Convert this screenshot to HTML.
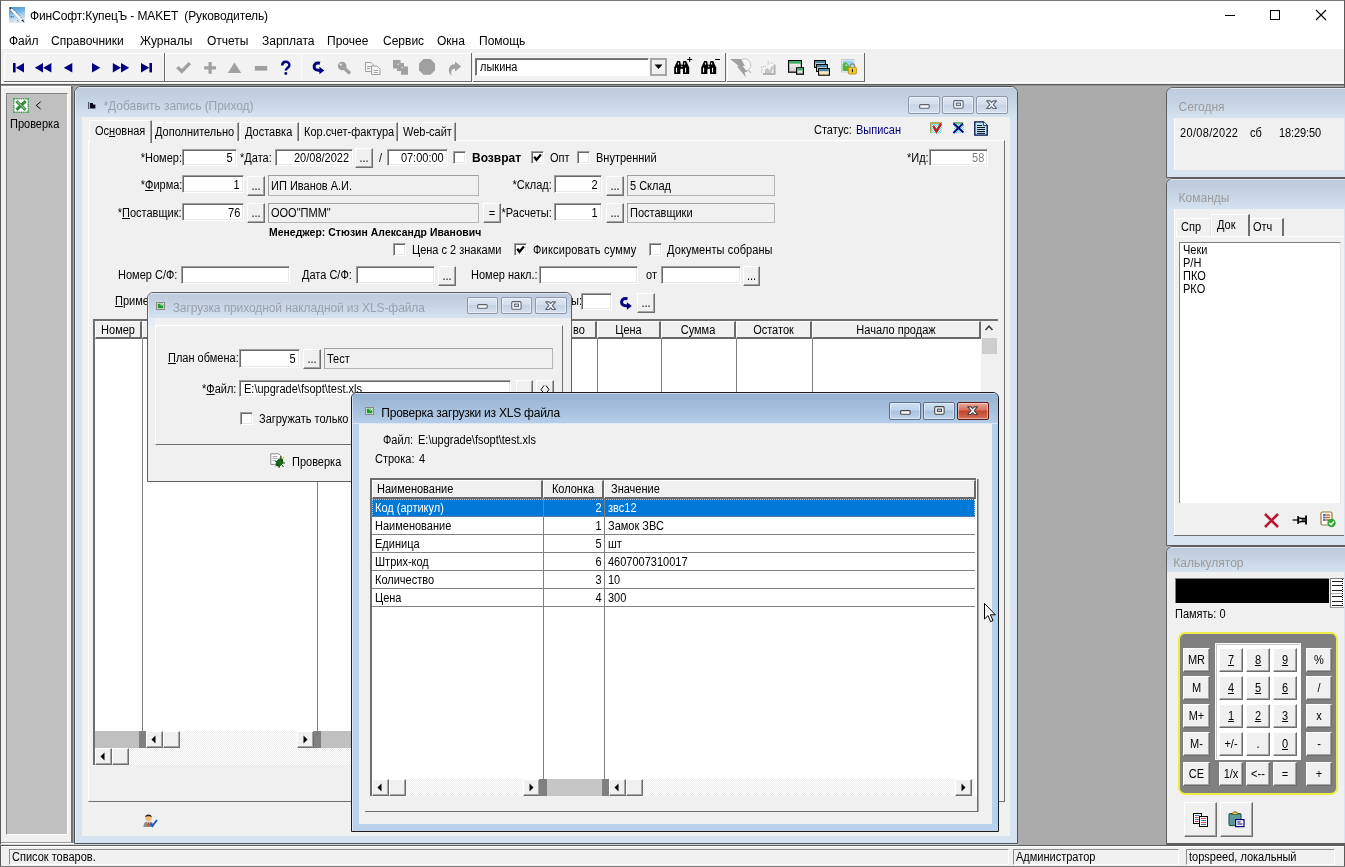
<!DOCTYPE html>
<html><head><meta charset="utf-8"><title>UI</title>
<style>
html,body{margin:0;padding:0;overflow:hidden;}
body{width:1345px;height:867px;overflow:hidden;position:relative;background:#ababab;font-family:"Liberation Sans",sans-serif;font-size:11px;}
.a{position:absolute;box-sizing:content-box;}
.t{font-family:"Liberation Sans",sans-serif;font-size:12px;line-height:13px;white-space:pre;color:#000;transform:scaleX(0.917);transform-origin:0 50%;}
.tr{transform-origin:100% 50%;}
.tc{transform-origin:50% 50%;}
.t12{font-family:"Liberation Sans",sans-serif;font-size:12px;line-height:14px;white-space:pre;color:#000;}
.sunk{border:1px solid;border-color:#a0a0a0 #fff #fff #a0a0a0;background:#fff;box-shadow:inset 1px 1px 0 #696969,inset -1px -1px 0 #e8e8e8;}
.gf{border:1px solid #a6a6a6;border-color:#a0a0a0 #b4b4b4 #b4b4b4 #a0a0a0;background:#f0f0f0;}
.btn{border:1px solid;border-color:#fff #6e6e6e #6e6e6e #fff;background:#f0f0f0;box-shadow:inset -1px -1px 0 #a5a5a5;}
.chk{border:1px solid;border-color:#a0a0a0 #fff #fff #a0a0a0;background:#fff;box-shadow:inset 1px 1px 0 #696969,inset -1px -1px 0 #e8e8e8;}
u{text-decoration:underline;text-underline-offset:1px;}
</style></head><body><div id="root" style="position:absolute;left:0;top:0;width:1345px;height:867px;overflow:hidden;will-change:transform;">
<div class="a " style="left:0px;top:0px;width:1345px;height:867px;background:#ababab;"></div>
<div class="a " style="left:0px;top:0px;width:1345px;height:49px;background:#fff;"></div>
<div class="a " style="left:0px;top:0px;width:1345px;height:1px;background:#7a7a7a;"></div>
<svg class="a" style="left:9px;top:7px" width="16" height="16" viewBox="0 0 16 16"><defs><linearGradient id="ti" x1="0" y1="0" x2="0.25" y2="1"><stop offset="0" stop-color="#4890cc"/><stop offset="0.35" stop-color="#6cb0e2"/><stop offset="0.7" stop-color="#b4d4ec"/><stop offset="1" stop-color="#dfecf6"/></linearGradient></defs><rect width="16" height="16" fill="url(#ti)"/><path d="M1.2 1.6 L3 1.4 L13.8 12.6 L15 15 L12.4 14 L1.6 3.6 Z" fill="#fff"/><path d="M3.4 1.6 L13.6 12" stroke="#0c2030" stroke-width="0.8" stroke-dasharray="0.9 1.5"/><path d="M1.6 4.2 L4 6.8" stroke="#0c2030" stroke-width="0.8" stroke-dasharray="0.9 1.2"/><path d="M0.6 0.6 L2.8 0.8 L1.2 2.6Z" fill="#0a1a26"/><path d="M12.2 13.2 L15.4 15.6 L14 12.4Z" fill="#05080c"/><path d="M1.6 9.8 h3.2" stroke="#1a3040" stroke-width="0.8" stroke-dasharray="1.4 0.6"/><path d="M8 13.4 l2 1.2" stroke="#1a3040" stroke-width="0.7" stroke-dasharray="0.8 0.8"/></svg>
<div class="a t12" style="left:30px;top:9.3px;letter-spacing:-0.12px;">ФинСофт:КупецЪ - MAKET  (Руководитель)</div>
<svg class="a" style="left:1215px;top:0" width="130" height="30" viewBox="0 0 130 30"><path d="M10 15.5 h10" stroke="#000" stroke-width="1"/><rect x="55.5" y="10.5" width="9" height="9" fill="none" stroke="#000" stroke-width="1"/><path d="M101 10 l10 10 M111 10 l-10 10" stroke="#000" stroke-width="1.1"/></svg>
<div class="a t12" style="left:9px;top:34.4px;">Файл</div>
<div class="a t12" style="left:51px;top:34.4px;">Справочники</div>
<div class="a t12" style="left:140px;top:34.4px;">Журналы</div>
<div class="a t12" style="left:207px;top:34.4px;">Отчеты</div>
<div class="a t12" style="left:262px;top:34.4px;">Зарплата</div>
<div class="a t12" style="left:327px;top:34.4px;">Прочее</div>
<div class="a t12" style="left:383px;top:34.4px;">Сервис</div>
<div class="a t12" style="left:437px;top:34.4px;">Окна</div>
<div class="a t12" style="left:479px;top:34.4px;">Помощь</div>
<div class="a " style="left:0px;top:49px;width:1345px;height:36px;background:#f0f0f0;"></div>
<div class="a " style="left:0px;top:82px;width:1345px;height:1px;background:#fff;"></div>
<div class="a " style="left:0px;top:83px;width:1345px;height:1px;background:#f0f0f0;"></div>
<div class="a " style="left:0px;top:84px;width:1345px;height:1px;background:#5c5c5c;"></div>
<div class="a " style="left:0px;top:85px;width:1345px;height:1px;background:#8e8e8e;"></div>
<div class="a " style="left:0px;top:0px;width:1px;height:867px;background:#5a5a5a;"></div>
<div class="a " style="left:1344px;top:0px;width:1px;height:867px;background:#5a5a5a;"></div>
<div class="a " style="left:4px;top:53px;width:160px;height:28px;background:#f2f2f2;"></div>
<div class="a " style="left:4px;top:53px;width:160px;height:1px;background:#fff;"></div>
<div class="a " style="left:4px;top:53px;width:1px;height:28px;background:#fff;"></div>
<div class="a " style="left:4px;top:81px;width:161px;height:1px;background:#6a6a6a;"></div>
<div class="a " style="left:164px;top:53px;width:1px;height:29px;background:#6a6a6a;"></div>
<div class="a " style="left:165px;top:53px;width:306px;height:28px;background:#f2f2f2;"></div>
<div class="a " style="left:165px;top:53px;width:306px;height:1px;background:#fff;"></div>
<div class="a " style="left:165px;top:53px;width:1px;height:28px;background:#fff;"></div>
<div class="a " style="left:165px;top:81px;width:307px;height:1px;background:#6a6a6a;"></div>
<div class="a " style="left:471px;top:53px;width:1px;height:29px;background:#6a6a6a;"></div>
<div class="a " style="left:473px;top:53px;width:252px;height:28px;background:#f2f2f2;"></div>
<div class="a " style="left:473px;top:53px;width:252px;height:1px;background:#fff;"></div>
<div class="a " style="left:473px;top:53px;width:1px;height:28px;background:#fff;"></div>
<div class="a " style="left:473px;top:81px;width:253px;height:1px;background:#6a6a6a;"></div>
<div class="a " style="left:725px;top:53px;width:1px;height:29px;background:#6a6a6a;"></div>
<div class="a " style="left:727px;top:53px;width:137px;height:28px;background:#f2f2f2;"></div>
<div class="a " style="left:727px;top:53px;width:137px;height:1px;background:#fff;"></div>
<div class="a " style="left:727px;top:53px;width:1px;height:28px;background:#fff;"></div>
<div class="a " style="left:727px;top:81px;width:138px;height:1px;background:#6a6a6a;"></div>
<div class="a " style="left:864px;top:53px;width:1px;height:29px;background:#6a6a6a;"></div>
<div class="a " style="left:301px;top:54px;width:1px;height:27px;background:#fafafa;"></div>
<svg class="a" style="left:0;top:49px" width="470" height="36" viewBox="0 49 470 36"><g fill="#000080"><rect x="13" y="63" width="2.6" height="9.4"/><path d="M24 63 L24 72.4 L15.8 67.7Z"/><path d="M43 63 L43 72.4 L34.8 67.7Z"/><path d="M51.4 63 L51.4 72.4 L43.2 67.7Z"/><path d="M72.3 63 L72.3 72.4 L63.8 67.7Z"/><path d="M92 63 L92 72.4 L100.3 67.7Z"/><path d="M112.8 63 L112.8 72.4 L121 67.7Z"/><path d="M121 63 L121 72.4 L129.2 67.7Z"/><path d="M141 63 L141 72.4 L149.3 67.7Z"/><rect x="149.4" y="63" width="2.6" height="9.4"/></g><g fill="#a0a0a0"><path d="M176.2 68.2 L178.6 66 L181.8 69 L188.6 62 L191 64.2 L181.8 73.8Z"/><path d="M208.5 62 h3.2 v4.3 h4.3 v3.2 h-4.3 v4.3 h-3.2 v-4.3 h-4.3 v-3.2 h4.3Z"/><path d="M234.5 62.6 L241.2 73 L227.8 73Z"/><rect x="254.8" y="66" width="12.4" height="4.6"/></g><path d="M282.2 65.6 C282.2 60.6 289.4 60.6 289.4 65.2 C289.4 67.6 285.8 67.8 285.8 70.6" stroke="#000080" stroke-width="2.5" fill="none"/><circle cx="285.8" cy="73.5" r="1.45" fill="#000080"/><path d="M320 63.3 C315.6 62.2 313.8 64.6 314.2 67.4 C314.6 70.2 317 70.4 320 70.4" stroke="#000080" stroke-width="3" fill="none"/><path d="M319.4 66.7 L324.3 70.4 L319.4 74.2Z" fill="#000080"/><circle cx="342.2" cy="66" r="4.3" fill="#a0a0a0"/><circle cx="340.8" cy="64.6" r="1.1" fill="#f2f2f2"/><path d="M344 68 L350 73.6" stroke="#a0a0a0" stroke-width="3.4"/><g fill="#f4f4f4" stroke="#a0a0a0" stroke-width="1"><path d="M365.5 62.5 h5.5 l2.5 2.5 v6.5 h-8Z"/><path d="M371.5 66 h5.5 l3 3 v5.5 h-8.5Z"/></g><path d="M367 66.5 h4 M367 68.5 h3 M373.5 70.5 h4.5 M373.5 72.5 h4.5" stroke="#a0a0a0" stroke-width="0.9"/><rect x="393" y="60" width="7.5" height="8.5" fill="#a0a0a0"/><rect x="397" y="63" width="7" height="8" fill="#a0a0a0"/><rect x="401" y="66.5" width="7" height="8.2" fill="#a0a0a0"/><rect x="397.6" y="63.6" width="1.3" height="1.3" fill="#eee"/><rect x="401.6" y="67" width="1.3" height="1.3" fill="#eee"/><path d="M423.5 59 h7 l4.5 4.5 v6.8 l-4.5 4.4 h-7 l-4.5 -4.4 v-6.8Z" fill="#a0a0a0"/><path d="M455 61.4 L461.2 66.4 L455 71.4 L455 68.6 C451.5 68.6 450.5 71.5 451.8 75.8 C447 72 448 64.2 455 64.2Z" fill="#a0a0a0"/></svg>
<div class="a " style="left:475px;top:58px;width:172px;height:16px;background:#fff;border:1px solid;border-color:#7f7f7f #fff #fff #7f7f7f;box-shadow:inset 1px 1px 0 #6a6a6a;"></div>
<div class="a t" style="left:480px;top:61.3px;">лыкина</div>
<div class="a " style="left:650px;top:58px;width:13px;height:14px;background:#f0f0f0;border:2px solid #a6a6a6;"></div>
<svg class="a" style="left:654px;top:64px" width="10" height="6" viewBox="0 0 10 6"><path d="M0.5 0.5 h8 l-4 4.5Z" fill="#000"/></svg>
<svg class="a" style="left:674px;top:56px" width="22" height="20" viewBox="0 0 22 20"><g fill="#000"><path d="M3.2 5 h2.8 l0.6 2 v11 h-6.4 v-6.5Z"/><path d="M9.4 5 h2.8 l3 6.5 v6.5 h-6.4 v-11Z"/><rect x="6" y="8.6" width="3.6" height="4.2"/></g><g fill="#fff"><rect x="2" y="11.8" width="1.1" height="4.6"/><rect x="11" y="11.8" width="1.1" height="4.6"/><rect x="3.9" y="6.6" width="1" height="2"/><rect x="10.2" y="6.6" width="1" height="2"/><rect x="7.3" y="9.6" width="1" height="1.6"/><rect x="6.6" y="13.4" width="2.2" height="5"/></g><path d="M13.2 3.5 h5 M15.7 1 v5" stroke="#000" stroke-width="1"/></svg>
<svg class="a" style="left:701px;top:56px" width="22" height="20" viewBox="0 0 22 20"><g fill="#000"><path d="M3.2 5 h2.8 l0.6 2 v11 h-6.4 v-6.5Z"/><path d="M9.4 5 h2.8 l3 6.5 v6.5 h-6.4 v-11Z"/><rect x="6" y="8.6" width="3.6" height="4.2"/></g><g fill="#fff"><rect x="2" y="11.8" width="1.1" height="4.6"/><rect x="11" y="11.8" width="1.1" height="4.6"/><rect x="3.9" y="6.6" width="1" height="2"/><rect x="10.2" y="6.6" width="1" height="2"/><rect x="7.3" y="9.6" width="1" height="1.6"/><rect x="6.6" y="13.4" width="2.2" height="5"/></g><path d="M14 3.5 h5" stroke="#000" stroke-width="1"/></svg>
<svg class="a" style="left:729px;top:57px" width="24" height="22" viewBox="0 0 24 22"><circle cx="15.5" cy="8" r="6.3" fill="#f6f6f6" stroke="#c4c4c4" stroke-width="1"/><path d="M19 13 l3 3" stroke="#c4c4c4" stroke-width="1.4"/><path d="M1 2 L12 2 L16 9 L13.5 9 L18.5 15 L15.5 15 L17 20.5 L8 9.5 L10.5 9.5Z" fill="#a0a0a0"/></svg>
<svg class="a" style="left:760px;top:60px" width="18" height="16" viewBox="0 0 18 16"><path d="M14.6 4.5 V14 H3" stroke="#b2b2b2" stroke-width="2" fill="none"/><path d="M1.6 7 V14 M3 6.5 H6" stroke="#b8b8b8" stroke-width="1.1" fill="none" stroke-dasharray="1.2 1.2"/><path d="M5 13 V9.5 L7.5 8 L9.5 10.5 L12 6 L13.5 7 L11.5 12 V13Z" fill="#c4c4c4"/><path d="M8.2 1 v4 M10.5 3 h3" stroke="#b4b4b4" stroke-width="1.1" stroke-dasharray="1.2 1"/></svg>
<svg class="a" style="left:788px;top:60px" width="17" height="15" viewBox="0 0 17 15"><defs><linearGradient id="wg" x1="0" y1="0" x2="0" y2="1"><stop offset="0" stop-color="#fff"/><stop offset="1" stop-color="#c9c9c9"/></linearGradient></defs><rect x="0.6" y="0.6" width="12.8" height="11.6" fill="url(#wg)" stroke="#000" stroke-width="1.2"/><rect x="1.2" y="1.2" width="11.6" height="2.4" fill="#2ea85a"/><rect x="8.6" y="7.8" width="6.8" height="6.4" fill="url(#wg)" stroke="#000" stroke-width="1.2"/><rect x="9.2" y="8.4" width="5.6" height="2" fill="#2ea85a"/></svg>
<svg class="a" style="left:814px;top:60px" width="17" height="16" viewBox="0 0 17 16"><defs><linearGradient id="cg" x1="0" y1="0" x2="0" y2="1"><stop offset="0" stop-color="#fff"/><stop offset="1" stop-color="#f6dc9c"/></linearGradient></defs><g stroke="#000" stroke-width="1.1"><rect x="0.6" y="0.6" width="10.8" height="6.8" fill="#dfe8ee"/><rect x="2.6" y="4.6" width="10.8" height="6.8" fill="#dfe8ee"/><rect x="4.6" y="8.6" width="10.8" height="6.6" fill="url(#cg)"/></g><rect x="1.2" y="1.2" width="9.6" height="2" fill="#3e7da0"/><rect x="3.2" y="5.2" width="9.6" height="2" fill="#3e7da0"/><rect x="5.2" y="9.2" width="9.6" height="2" fill="#3e7da0"/></svg>
<svg class="a" style="left:841px;top:59px" width="17" height="16" viewBox="0 0 17 16"><defs><linearGradient id="pg" x1="0" y1="0" x2="0" y2="1"><stop offset="0" stop-color="#8ecdf0"/><stop offset="1" stop-color="#d8eefa"/></linearGradient></defs><rect x="0.5" y="0.5" width="12.5" height="12.5" fill="#fff" stroke="#c8c8c8"/><rect x="1.6" y="1.6" width="10.4" height="10.4" fill="url(#pg)"/><path d="M1.6 12 V5 C4 2.5 7 3.5 8 7 L10 9 L12 12Z" fill="#56b43c"/><path d="M4 7 l1.5 -2 l1 2Z" fill="#cfeec0"/><path d="M9 8.5 v-1.4 c0 -3 4.6 -3 4.6 0 v1.4" stroke="#8a8a8a" stroke-width="1.4" fill="none"/><rect x="7.4" y="8.4" width="8" height="6.6" rx="0.8" fill="#f3c930" stroke="#b88b0e" stroke-width="0.8"/><rect x="10.9" y="10" width="1.1" height="3.2" fill="#222"/></svg>
<div class="a " style="left:1px;top:844px;width:1343px;height:23px;background:#f0f0f0;"></div>
<div class="a " style="left:0px;top:844px;width:1345px;height:1px;background:#ababab;"></div>
<div class="a " style="left:1px;top:844px;width:1017px;height:1px;background:#d2d5d9;"></div>
<div class="a " style="left:1166px;top:844px;width:178px;height:1px;background:#c4c8cc;"></div>
<div class="a " style="left:0px;top:845px;width:1345px;height:1px;background:#5c5c5c;"></div>
<div class="a " style="left:1px;top:846px;width:1343px;height:1px;background:#fff;"></div>
<div class="a " style="left:9px;top:849px;width:998px;height:14px;border:1px solid;border-color:#8c8c8c #fff #fff #8c8c8c;background:#f0f0f0;"><span class="t" style="position:absolute;left:1.5px;top:1.2px">Список товаров.</span></div>
<div class="a " style="left:1013px;top:849px;width:164px;height:14px;border:1px solid;border-color:#8c8c8c #fff #fff #8c8c8c;background:#f0f0f0;"><span class="t" style="position:absolute;left:1.5px;top:1.2px">Администратор</span></div>
<div class="a " style="left:1186px;top:849px;width:147px;height:14px;border:1px solid;border-color:#8c8c8c #fff #fff #8c8c8c;background:#f0f0f0;"><span class="t" style="position:absolute;left:1.5px;top:1.2px">topspeed, локальный</span></div>
<div class="a " style="left:0px;top:866px;width:1345px;height:1px;background:#7a7a7a;"></div>
<div class="a " style="left:1px;top:86px;width:70px;height:756px;background:#f0f0f0;"></div>
<div class="a " style="left:1px;top:86px;width:70px;height:2px;background:#fbfbfb;"></div>
<div class="a " style="left:71px;top:86px;width:1px;height:757px;background:#6e6e6e;"></div>
<div class="a " style="left:72px;top:86px;width:1px;height:757px;background:#787878;"></div>
<div class="a " style="left:73px;top:86px;width:1px;height:757px;background:#a6a6a6;"></div>
<div class="a " style="left:1px;top:842px;width:71px;height:1px;background:#9a9a9a;"></div>
<div class="a " style="left:1px;top:843px;width:73px;height:1px;background:#fff;"></div>
<div class="a " style="left:6px;top:93px;width:60px;height:740px;background:#c0c0c0;border:1px solid;border-color:#808080 #fff #fff #808080;"></div>
<svg class="a" style="left:13px;top:98px" width="16" height="15" viewBox="0 0 16 15"><rect x="0.75" y="0.75" width="14.5" height="13.5" fill="#fff" stroke="#3c9a4a" stroke-width="1.5" stroke-dasharray="1.2 0.6"/><path d="M3.4 3.2 L12.6 11.8 M12.6 3.2 L3.4 11.8" stroke="#2e8b3c" stroke-width="3"/><path d="M4 3.4 L12 11.4" stroke="#fff" stroke-width="0.7"/></svg>
<svg class="a" style="left:35px;top:101px" width="7" height="9" viewBox="0 0 7 9"><path d="M5.6 0.8 L1.2 4.4 L5.6 8" stroke="#000" stroke-width="1" fill="none"/></svg>
<div class="a t" style="left:9.5px;top:118.4px;">Проверка</div>
<div class="a " style="left:74px;top:86px;width:942px;height:756px;background:#d8e3f1;border:1px solid #50525a;border-radius:7px 7px 0 0;overflow:hidden;"><div style="position:absolute;left:0;top:0;right:0;height:30px;background:linear-gradient(#bccadb 0%,#c6d4e4 50%,#d5e2f0 100%);"></div><div style="position:absolute;left:0;top:0;right:0;height:1px;background:rgba(255,255,255,0.55)"></div><div style="position:absolute;left:0;top:0;bottom:0;width:1px;background:rgba(255,255,255,0.5)"></div></div>
<div class="a " style="left:82px;top:117px;width:928px;height:719px;background:#f0f0f0;"></div>
<svg class="a" style="left:88px;top:102px" width="8" height="7" viewBox="0 0 8 7"><rect x="0" y="0" width="8" height="7" fill="#bfe4f4" opacity="0.6"/><rect x="0.3" y="0" width="0.9" height="7" fill="#223"/><path d="M2 1 h3 v1.6 h2.4 v4 h-5.4Z" fill="#0a0a1e"/></svg>
<div class="a t12" style="left:103.5px;top:99.2px;color:#9aa1ac;letter-spacing:-0.05px;">*Добавить запись (Приход)</div>
<div class="a " style="left:908px;top:96px;width:30px;height:16px;background:linear-gradient(#dfe8f3 0%,#d3deec 45%,#c6d3e4 50%,#d6e0ee 100%);border:1px solid #8d99aa;border-radius:2px;box-shadow:inset 0 0 0 1px rgba(255,255,255,0.45);"></div>
<svg class="a" style="left:918.5px;top:103.8px" width="11" height="5.5" viewBox="0 0 12 6"><rect x="0.7" y="0.7" width="10.4" height="4" rx="1" fill="#f7f9fb" stroke="#5c6470" stroke-width="1.2"/></svg>
<div class="a " style="left:942px;top:96px;width:30px;height:16px;background:linear-gradient(#dfe8f3 0%,#d3deec 45%,#c6d3e4 50%,#d6e0ee 100%);border:1px solid #8d99aa;border-radius:2px;box-shadow:inset 0 0 0 1px rgba(255,255,255,0.45);"></div>
<svg class="a" style="left:952.5px;top:100.0px" width="11" height="9" viewBox="0 0 12 10"><rect x="0.7" y="0.7" width="10.4" height="8.4" rx="1.2" fill="#f7f9fb" stroke="#5c6470" stroke-width="1.2"/><rect x="3.6" y="3.4" width="4.6" height="2.8" fill="#d5deea" stroke="#5c6470" stroke-width="1.1"/></svg>
<div class="a " style="left:976px;top:96px;width:30px;height:16px;background:linear-gradient(#dfe8f3 0%,#d3deec 45%,#c6d3e4 50%,#d6e0ee 100%);border:1px solid #8d99aa;border-radius:2px;box-shadow:inset 0 0 0 1px rgba(255,255,255,0.45);"></div>
<svg class="a" style="left:986.4px;top:100.0px" width="11.2" height="9.5" viewBox="0 0 13 11"><path d="M0.8 1 h3.9 l1.8 2 l1.8 -2 h3.9 l-3.8 4.4 l3.8 4.4 h-3.9 l-1.8 -2 l-1.8 2 h-3.9 l3.8 -4.4Z" fill="#f7f9fb" stroke="#5c6470" stroke-width="1.25" stroke-linejoin="round"/></svg>
<div class="a " style="left:88px;top:140px;width:915px;height:660px;border:1px solid;border-color:#fff #6e6e6e #6e6e6e #fff;background:#f0f0f0;"></div>
<div class="a " style="left:153px;top:122px;width:84px;height:18px;background:#f0f0f0;border-top:1px solid #fff;border-left:1px solid #fff;border-right:1px solid #696969;box-shadow:inset -1px 0 0 #a0a0a0;"></div>
<div class="a t" style="left:155px;top:126.1px;"><u>Д</u>ополнительно</div>
<div class="a " style="left:240px;top:122px;width:57px;height:18px;background:#f0f0f0;border-top:1px solid #fff;border-left:1px solid #fff;border-right:1px solid #696969;box-shadow:inset -1px 0 0 #a0a0a0;"></div>
<div class="a t" style="left:245px;top:126.1px;">Доставка</div>
<div class="a " style="left:300px;top:122px;width:96px;height:18px;background:#f0f0f0;border-top:1px solid #fff;border-left:1px solid #fff;border-right:1px solid #696969;box-shadow:inset -1px 0 0 #a0a0a0;"></div>
<div class="a t" style="left:304px;top:126.1px;">Кор.счет-фактура</div>
<div class="a " style="left:399px;top:122px;width:55px;height:18px;background:#f0f0f0;border-top:1px solid #fff;border-left:1px solid #fff;border-right:1px solid #696969;box-shadow:inset -1px 0 0 #a0a0a0;"></div>
<div class="a t" style="left:403px;top:126.1px;">Web-сайт</div>
<div class="a " style="left:89px;top:120px;width:61px;height:22px;background:#f0f0f0;border-top:1px solid #fff;border-left:1px solid #fff;border-right:1px solid #696969;box-shadow:inset -1px 0 0 #a0a0a0;"></div>
<div class="a t" style="left:94.5px;top:124.9px;">Ос<u>н</u>овная</div>
<div class="a t" style="left:814px;top:123.6px;">Статус:</div>
<div class="a t" style="left:856px;top:123.6px;color:#000080;">Выписан</div>
<div class="a " style="left:932px;top:124px;width:10px;height:9px;background-image:repeating-conic-gradient(#fff 0% 25%,#5fe0e8 0% 50%);background-size:2px 2px;"></div>
<svg class="a" style="left:930px;top:122px" width="13" height="12" viewBox="0 0 13 12"><path d="M0.8 11 V1 H12" stroke="#a09838" stroke-width="1.4" fill="none"/><path d="M3.4 4 L6.4 9.6 L11 1.6" stroke="#c81820" stroke-width="2.4" fill="none"/></svg>
<div class="a " style="left:954px;top:124px;width:10px;height:9px;background-image:repeating-conic-gradient(#fff 0% 25%,#5fe0e8 0% 50%);background-size:2px 2px;"></div>
<svg class="a" style="left:952px;top:122px" width="13" height="12" viewBox="0 0 13 12"><path d="M1 1 H11" stroke="#40a040" stroke-width="1.4"/><path d="M1.6 1.6 L11.4 10.6 M11 1.6 L1.4 11" stroke="#000080" stroke-width="2"/></svg>
<svg class="a" style="left:974px;top:121px" width="15" height="15" viewBox="0 0 15 15"><path d="M0.8 0.8 h8.6 l3.8 3.8 v9.6 h-12.4Z" fill="#bfe2f8" stroke="#00104a" stroke-width="1.3"/><path d="M9.4 0.8 v3.8 h3.8" fill="#e8f6ff" stroke="#00104a" stroke-width="0.8"/><path d="M3 4.5 h5 M3 6.5 h8 M3 8.5 h8 M3 10.5 h8 M3 12.4 h8" stroke="#000" stroke-width="0.9"/></svg>
<div class="a t tr" style="right:1163px;top:151.6px;">*Номер:</div>
<div class="a sunk" style="left:182px;top:149px;width:53px;height:15px;background:#fff;"><span class="t tr" style="position:absolute;right:3px;top:2.4px;color:#000">5</span></div>
<div class="a t" style="left:240px;top:151.6px;">*<u>Д</u>ата:</div>
<div class="a sunk" style="left:275px;top:149px;width:76px;height:15px;background:#fff;"><span class="t tr" style="position:absolute;right:3px;top:2.4px;color:#000">20/08/2022</span></div>
<div class="a btn" style="left:355px;top:148px;width:16px;height:18px;"><span class="t tc" style="position:absolute;left:0;right:0;text-align:center;top:3.0px;">...</span></div>
<div class="a t" style="left:379px;top:151.6px;">/</div>
<div class="a sunk" style="left:387px;top:149px;width:59px;height:15px;background:#fff;"><span class="t tr" style="position:absolute;right:3px;top:2.4px;color:#000">07:00:00</span></div>
<div class="a chk" style="left:453px;top:151px;width:11px;height:11px;"></div>
<div class="a t" style="left:472px;top:151.6px;font-weight:bold;transform:none;">Возврат</div>
<div class="a chk" style="left:531px;top:151px;width:11px;height:11px;"><svg width="11" height="11" viewBox="0 0 11 11" style="position:absolute;left:0;top:0"><path d="M2.2 4.8 L4.5 7.8 L8.9 2.6" stroke="#000" stroke-width="2.3" fill="none"/></svg></div>
<div class="a t" style="left:550px;top:151.6px;">Опт</div>
<div class="a chk" style="left:577px;top:151px;width:11px;height:11px;"></div>
<div class="a t" style="left:596px;top:151.6px;">Внутренний</div>
<div class="a t tr" style="right:416.5px;top:151.6px;">*Ид:</div>
<div class="a sunk" style="left:929px;top:149px;width:57px;height:15px;background:#fff;"><span class="t tr" style="position:absolute;right:3px;top:2.4px;color:#808080">58</span></div>
<div class="a t tr" style="right:1163px;top:179.1px;">*<u>Ф</u>ирма:</div>
<div class="a sunk" style="left:182px;top:175px;width:60px;height:16px;background:#fff;"><span class="t tr" style="position:absolute;right:3px;top:2.9px;color:#000">1</span></div>
<div class="a btn" style="left:247px;top:176px;width:16px;height:18px;"><span class="t tc" style="position:absolute;left:0;right:0;text-align:center;top:3.0px;">...</span></div>
<div class="a gf" style="left:268px;top:175px;width:209px;height:19px;"><span class="t" style="position:absolute;left:2px;top:3.6px;">ИП Иванов А.И.</span></div>
<div class="a t tr" style="right:793px;top:179.1px;">*Склад:</div>
<div class="a sunk" style="left:554px;top:175px;width:46px;height:16px;background:#fff;"><span class="t tr" style="position:absolute;right:3px;top:2.9px;color:#000">2</span></div>
<div class="a btn" style="left:606px;top:176px;width:16px;height:18px;"><span class="t tc" style="position:absolute;left:0;right:0;text-align:center;top:3.0px;">...</span></div>
<div class="a gf" style="left:627px;top:175px;width:146px;height:19px;"><span class="t" style="position:absolute;left:2px;top:3.6px;">5 Склад</span></div>
<div class="a t tr" style="right:1163px;top:206.6px;">*<u>П</u>оставщик:</div>
<div class="a sunk" style="left:182px;top:203px;width:60px;height:16px;background:#fff;"><span class="t tr" style="position:absolute;right:3px;top:2.9px;color:#000">76</span></div>
<div class="a btn" style="left:247px;top:203px;width:16px;height:18px;"><span class="t tc" style="position:absolute;left:0;right:0;text-align:center;top:3.0px;">...</span></div>
<div class="a gf" style="left:268px;top:203px;width:209px;height:18px;"><span class="t" style="position:absolute;left:2px;top:3.1px;">ООО"ПММ"</span></div>
<div class="a btn" style="left:483px;top:203px;width:16px;height:18px;"><span class="t tc" style="position:absolute;left:0;right:0;text-align:center;top:3.0px;">=</span></div>
<div class="a t tr" style="right:793px;top:206.6px;">*Расчеты:</div>
<div class="a sunk" style="left:554px;top:203px;width:46px;height:16px;background:#fff;"><span class="t tr" style="position:absolute;right:3px;top:2.9px;color:#000">1</span></div>
<div class="a btn" style="left:606px;top:203px;width:16px;height:18px;"><span class="t tc" style="position:absolute;left:0;right:0;text-align:center;top:3.0px;">...</span></div>
<div class="a gf" style="left:627px;top:203px;width:146px;height:18px;"><span class="t" style="position:absolute;left:2px;top:3.1px;">Поставщики</span></div>
<div class="a t" style="left:269px;top:225.8px;font-weight:bold;font-size:10.4px;letter-spacing:0.05px;transform:none;">Менеджер: Стюзин Александр Иванович</div>
<div class="a chk" style="left:393px;top:243px;width:11px;height:11px;"></div>
<div class="a t" style="left:411.5px;top:244.1px;">Цена с 2 знаками</div>
<div class="a chk" style="left:514px;top:243px;width:11px;height:11px;"><svg width="11" height="11" viewBox="0 0 11 11" style="position:absolute;left:0;top:0"><path d="M2.2 4.8 L4.5 7.8 L8.9 2.6" stroke="#000" stroke-width="2.3" fill="none"/></svg></div>
<div class="a t" style="left:533px;top:244.1px;letter-spacing:0.2px;">Фиксировать сумму</div>
<div class="a chk" style="left:649px;top:243px;width:11px;height:11px;"></div>
<div class="a t" style="left:667px;top:244.1px;letter-spacing:0.1px;">Документы собраны</div>
<div class="a t" style="left:117.5px;top:269.1px;">Номер С/Ф:</div>
<div class="a sunk" style="left:181px;top:266px;width:107px;height:16px;background:#fff;"></div>
<div class="a t" style="left:302px;top:269.1px;">Дата С/Ф:</div>
<div class="a sunk" style="left:356px;top:266px;width:77px;height:16px;background:#fff;"></div>
<div class="a btn" style="left:438px;top:266px;width:16px;height:18px;"><span class="t tc" style="position:absolute;left:0;right:0;text-align:center;top:3.0px;">...</span></div>
<div class="a t" style="left:470.5px;top:269.1px;">Номер накл.:</div>
<div class="a sunk" style="left:539px;top:266px;width:97px;height:16px;background:#fff;"></div>
<div class="a t" style="left:645.5px;top:269.1px;">от</div>
<div class="a sunk" style="left:661px;top:266px;width:78px;height:16px;background:#fff;"></div>
<div class="a btn" style="left:743px;top:266px;width:15px;height:18px;"><span class="t tc" style="position:absolute;left:0;right:0;text-align:center;top:3.0px;">...</span></div>
<div class="a t" style="left:115px;top:295.1px;"><u>П</u>риме</div>
<div class="a t" style="left:571px;top:295.1px;">ы:</div>
<div class="a sunk" style="left:581px;top:293px;width:29px;height:15px;background:#fff;"></div>
<svg class="a" style="left:619px;top:297px" width="13" height="13" viewBox="311.5 61.5 13 13"><path d="M320 63.3 C315.6 62.2 313.8 64.6 314.2 67.4 C314.6 70.2 317 70.4 320 70.4" stroke="#000080" stroke-width="3" fill="none"/><path d="M319.4 66.7 L324.3 70.4 L319.4 74.2Z" fill="#000080"/></svg>
<div class="a btn" style="left:637px;top:293px;width:16px;height:18px;"><span class="t tc" style="position:absolute;left:0;right:0;text-align:center;top:3.0px;">...</span></div>
<div class="a " style="left:93px;top:319px;width:905px;height:446px;background:#fff;"></div>
<div class="a " style="left:93px;top:319px;width:905px;height:2px;background:#6e6e6e;"></div>
<div class="a " style="left:93px;top:319px;width:2px;height:446px;background:#6e6e6e;"></div>
<div class="a " style="left:95px;top:321px;width:44px;height:15px;background:#f0f0f0;border-left:1px solid #fff;border-top:1px solid #fff;border-right:2px solid #6a6a6a;border-bottom:2px solid #6a6a6a;"></div>
<div class="a t tc" style="left:95px;width:46px;text-align:center;top:323.9px;">Номер</div>
<div class="a " style="left:142px;top:321px;width:452px;height:15px;background:#f0f0f0;border-left:1px solid #fff;border-top:1px solid #fff;border-right:2px solid #6a6a6a;border-bottom:2px solid #6a6a6a;"></div>
<div class="a " style="left:597px;top:321px;width:61px;height:15px;background:#f0f0f0;border-left:1px solid #fff;border-top:1px solid #fff;border-right:2px solid #6a6a6a;border-bottom:2px solid #6a6a6a;"></div>
<div class="a t tc" style="left:597px;width:63px;text-align:center;top:323.9px;">Цена</div>
<div class="a " style="left:661px;top:321px;width:72px;height:15px;background:#f0f0f0;border-left:1px solid #fff;border-top:1px solid #fff;border-right:2px solid #6a6a6a;border-bottom:2px solid #6a6a6a;"></div>
<div class="a t tc" style="left:661px;width:74px;text-align:center;top:323.9px;">Сумма</div>
<div class="a " style="left:736px;top:321px;width:73px;height:15px;background:#f0f0f0;border-left:1px solid #fff;border-top:1px solid #fff;border-right:2px solid #6a6a6a;border-bottom:2px solid #6a6a6a;"></div>
<div class="a t tc" style="left:736px;width:75px;text-align:center;top:323.9px;">Остаток</div>
<div class="a " style="left:812px;top:321px;width:166px;height:15px;background:#f0f0f0;border-left:1px solid #fff;border-top:1px solid #fff;border-right:2px solid #6a6a6a;border-bottom:2px solid #6a6a6a;"></div>
<div class="a t tc" style="left:812px;width:168px;text-align:center;top:323.9px;">Начало продаж</div>
<div class="a t" style="left:572.6px;top:323.9px;">во</div>
<div class="a " style="left:142px;top:339px;width:1px;height:392px;background:#808080;"></div>
<div class="a " style="left:317px;top:339px;width:1px;height:392px;background:#808080;"></div>
<div class="a " style="left:597px;top:339px;width:1px;height:392px;background:#808080;"></div>
<div class="a " style="left:661px;top:339px;width:1px;height:392px;background:#808080;"></div>
<div class="a " style="left:736px;top:339px;width:1px;height:392px;background:#808080;"></div>
<div class="a " style="left:812px;top:339px;width:1px;height:392px;background:#808080;"></div>
<div class="a " style="left:981px;top:321px;width:17px;height:410px;background:#f0f0f0;"></div>
<svg class="a" style="left:984px;top:324px" width="10" height="8" viewBox="0 0 10 8"><path d="M1.5 6 L5 2.2 L8.5 6" stroke="#404040" stroke-width="1.6" fill="none"/></svg>
<div class="a " style="left:982px;top:338px;width:15px;height:16px;background:#cdcdcd;"></div>
<div class="a " style="left:95px;top:731px;width:903px;height:17px;background-image:repeating-conic-gradient(#fff 0% 25%,#ececec 0% 50%);background-size:2px 2px;"></div>
<div class="a " style="left:95px;top:748px;width:903px;height:17px;background-image:repeating-conic-gradient(#fff 0% 25%,#ececec 0% 50%);background-size:2px 2px;"></div>
<div class="a " style="left:95px;top:731px;width:44px;height:17px;background:#c0c0c0;"></div>
<div class="a " style="left:139px;top:731px;width:7px;height:17px;background:#808080;"></div>
<div class="a btn" style="left:146px;top:731px;width:15px;height:15px;"></div>
<svg class="a" style="left:151px;top:735px" width="5" height="9" viewBox="0 0 5 9"><path d="M4.5 0.5 V8.5 L0.5 4.5Z" fill="#000"/></svg>
<div class="a btn" style="left:163px;top:731px;width:15px;height:15px;"></div>
<div class="a btn" style="left:297px;top:731px;width:15px;height:15px;"></div>
<svg class="a" style="left:303px;top:735px" width="5" height="9" viewBox="0 0 5 9"><path d="M0.5 0.5 V8.5 L4.5 4.5Z" fill="#000"/></svg>
<div class="a " style="left:314px;top:731px;width:7px;height:17px;background:#808080;"></div>
<div class="a " style="left:321px;top:731px;width:40px;height:17px;background:#c0c0c0;"></div>
<div class="a btn" style="left:95px;top:748px;width:15px;height:15px;"></div>
<svg class="a" style="left:100px;top:752px" width="5" height="9" viewBox="0 0 5 9"><path d="M4.5 0.5 V8.5 L0.5 4.5Z" fill="#000"/></svg>
<div class="a btn" style="left:112px;top:748px;width:15px;height:15px;"></div>
<svg class="a" style="left:142px;top:812px" width="16" height="16" viewBox="0 0 16 16"><path d="M1.5 15 C1.5 10.5 3.5 9.5 6.5 9.5 C9.5 9.5 11.5 10.5 11.5 15Z" fill="#8c8c8c"/><path d="M5 9.6 L6.5 13.5 L8 9.6Z" fill="#fff"/><path d="M6 10.2 h1 l0.4 3 l-0.9 1 l-0.9 -1Z" fill="#d04010"/><circle cx="6.5" cy="6" r="3.1" fill="#f4b878"/><path d="M3.2 5.4 C3 1.6 10 1.6 9.8 5.4 C8.5 4 4.5 4 3.2 5.4Z" fill="#2a1a10"/><path d="M8.2 11.4 L10.4 14 L15 8" stroke="#1c5ed0" stroke-width="2" fill="none"/></svg>
<div class="a " style="left:147px;top:292px;width:423px;height:188px;background:#eef1f6;border:1px solid #5e5e5e;border-radius:6px 6px 0 0;overflow:hidden;"><div style="position:absolute;left:0;top:0;right:0;height:25px;background:linear-gradient(#bccadb 0%,#c6d4e4 50%,#d5e2f0 100%);"></div><div style="position:absolute;left:0;top:0;right:0;height:1px;background:rgba(255,255,255,0.55)"></div><div style="position:absolute;left:0;top:0;bottom:0;width:1px;background:rgba(255,255,255,0.5)"></div></div>
<div class="a " style="left:155px;top:318px;width:408px;height:127px;background:#f0f0f0;"></div>
<div class="a " style="left:148px;top:318px;width:423px;height:163px;background:#f0f0f0;"></div>
<div class="a " style="left:148px;top:318px;width:7px;height:8px;background:#e6ecf5;"></div>
<svg class="a" style="left:156px;top:302px" width="9" height="8" viewBox="0 0 9 8"><rect x="0.5" y="0.5" width="8" height="7" fill="#fff" stroke="#8a8a8a" stroke-width="1"/><rect x="1.6" y="1.6" width="5.8" height="4.8" fill="#1f9a2e"/><path d="M4.4 2 l1.2 1.4 l1.4 -1.2" stroke="#fff" stroke-width="0.9" fill="none"/></svg>
<div class="a t12" style="left:172.7px;top:300.6px;color:#9aa2ae;letter-spacing:-0.1px;">Загрузка приходной накладной из XLS-файла</div>
<div class="a " style="left:467px;top:297px;width:29px;height:15px;background:linear-gradient(#dfe8f3 0%,#d3deec 45%,#c6d3e4 50%,#d6e0ee 100%);border:1px solid #8d99aa;border-radius:2px;box-shadow:inset 0 0 0 1px rgba(255,255,255,0.45);"></div>
<svg class="a" style="left:477.0px;top:304.3px" width="11" height="5.5" viewBox="0 0 12 6"><rect x="0.7" y="0.7" width="10.4" height="4" rx="1" fill="#f7f9fb" stroke="#5c6470" stroke-width="1.2"/></svg>
<div class="a " style="left:501px;top:297px;width:29px;height:15px;background:linear-gradient(#dfe8f3 0%,#d3deec 45%,#c6d3e4 50%,#d6e0ee 100%);border:1px solid #8d99aa;border-radius:2px;box-shadow:inset 0 0 0 1px rgba(255,255,255,0.45);"></div>
<svg class="a" style="left:511.0px;top:300.5px" width="11" height="9" viewBox="0 0 12 10"><rect x="0.7" y="0.7" width="10.4" height="8.4" rx="1.2" fill="#f7f9fb" stroke="#5c6470" stroke-width="1.2"/><rect x="3.6" y="3.4" width="4.6" height="2.8" fill="#d5deea" stroke="#5c6470" stroke-width="1.1"/></svg>
<div class="a " style="left:535px;top:297px;width:30px;height:15px;background:linear-gradient(#dfe8f3 0%,#d3deec 45%,#c6d3e4 50%,#d6e0ee 100%);border:1px solid #8d99aa;border-radius:2px;box-shadow:inset 0 0 0 1px rgba(255,255,255,0.45);"></div>
<svg class="a" style="left:545.4px;top:300.5px" width="11.2" height="9.5" viewBox="0 0 13 11"><path d="M0.8 1 h3.9 l1.8 2 l1.8 -2 h3.9 l-3.8 4.4 l3.8 4.4 h-3.9 l-1.8 -2 l-1.8 2 h-3.9 l3.8 -4.4Z" fill="#f7f9fb" stroke="#5c6470" stroke-width="1.25" stroke-linejoin="round"/></svg>
<div class="a " style="left:155px;top:325px;width:406px;height:118px;border:1px solid;border-color:#fff #6e6e6e #6e6e6e #fff;background:#f0f0f0;"></div>
<div class="a t" style="left:168px;top:352.1px;"><u>П</u>лан обмена:</div>
<div class="a sunk" style="left:239px;top:349px;width:59px;height:17px;background:#fff;"><span class="t tr" style="position:absolute;right:3px;top:3.4px;color:#000">5</span></div>
<div class="a btn" style="left:303px;top:349px;width:16px;height:18px;"><span class="t tc" style="position:absolute;left:0;right:0;text-align:center;top:3.0px;">...</span></div>
<div class="a gf" style="left:324px;top:348px;width:227px;height:19px;"><span class="t" style="position:absolute;left:2px;top:3.6px;">Тест</span></div>
<div class="a t" style="left:202px;top:382.6px;">*<u>Ф</u>айл:</div>
<div class="a sunk" style="left:239px;top:380px;width:270px;height:15px;background:#fff;"><span class="t " style="position:absolute;left:4px;top:2.4px;color:#000">E:\upgrade\fsopt\test.xls</span></div>
<div class="a btn" style="left:516px;top:380px;width:15px;height:18px;"></div>
<div class="a btn" style="left:536px;top:380px;width:16px;height:18px;"></div>
<svg class="a" style="left:540px;top:384px" width="10" height="11" viewBox="0 0 10 11"><path d="M4 1.5 L1 5.5 L4 9.5 M6 1.5 L9 5.5 L6 9.5" stroke="#000" stroke-width="1" fill="none"/></svg>
<div class="a chk" style="left:240px;top:412px;width:11px;height:11px;"></div>
<div class="a t" style="left:259px;top:412.9px;">Загружать только</div>
<svg class="a" style="left:270px;top:453px" width="17" height="16" viewBox="0 0 17 16"><path d="M0.8 0.8 h8 l1.6 1.6 v9 h-9.6Z" fill="#fff" stroke="#8a8a8a" stroke-width="1"/><path d="M2.5 3.5 h5 M2.5 5.5 h5 M2.5 7.5 h3" stroke="#9a9a9a" stroke-width="0.8"/><ellipse cx="9.5" cy="9.5" rx="3.2" ry="4.4" transform="rotate(35 9.5 9.5)" fill="#1e6a1e"/><path d="M5 8 l3 1 M5.5 13 l3 -2 M9 15 l0.5 -3 M13 6 l-2 2 M15 10 l-3 0 M13.5 14 l-2 -2.5 M11 3 l0 3" stroke="#103c10" stroke-width="1"/><path d="M12.5 5.5 l1.5 -1.5" stroke="#e0d020" stroke-width="1.4"/></svg>
<div class="a t" style="left:292.4px;top:455.6px;">Проверка</div>
<div class="a " style="left:351px;top:392px;width:646px;height:438px;background:#b9d1ea;border:1px solid #1c1c1c;border-radius:6px 6px 0 0;overflow:hidden;"><div style="position:absolute;left:0;top:0;right:0;height:31px;background:linear-gradient(#97b2d0 0%,#a5bfdc 50%,#b5cee9 100%);"></div><div style="position:absolute;left:0;top:0;right:0;height:1px;background:rgba(255,255,255,0.55)"></div><div style="position:absolute;left:0;top:0;bottom:0;width:1px;background:rgba(255,255,255,0.5)"></div></div>
<div class="a " style="left:359px;top:424px;width:633px;height:400px;background:#f0f0f0;"></div>
<div class="a " style="left:352px;top:423px;width:646px;height:1px;background:#dfe9f5;"></div>
<div class="a " style="left:995px;top:424px;width:3px;height:400px;background:linear-gradient(90deg,#b0d4f0,#98d6f8);"></div>
<svg class="a" style="left:365px;top:407px" width="9" height="8" viewBox="0 0 9 8"><rect x="0.5" y="0.5" width="8" height="7" fill="#fff" stroke="#8a8a8a" stroke-width="1"/><rect x="1.6" y="1.6" width="5.8" height="4.8" fill="#1f9a2e"/><path d="M4.4 2 l1.2 1.4 l1.4 -1.2" stroke="#fff" stroke-width="0.9" fill="none"/></svg>
<div class="a t12" style="left:381.3px;top:405.6px;letter-spacing:-0.23px;">Проверка загрузки из XLS файла</div>
<div class="a " style="left:889px;top:402px;width:30px;height:16px;background:linear-gradient(#cfe0f2 0%,#bdd2ea 45%,#a9c2df 50%,#c2d6ec 100%);border:1px solid #5b6f88;border-radius:2px;box-shadow:inset 0 0 0 1px rgba(255,255,255,0.45);"></div>
<svg class="a" style="left:899.5px;top:409.8px" width="11" height="5.5" viewBox="0 0 12 6"><rect x="0.7" y="0.7" width="10.4" height="4" rx="1" fill="#fff" stroke="#444444" stroke-width="1.2"/></svg>
<div class="a " style="left:923px;top:402px;width:30px;height:16px;background:linear-gradient(#cfe0f2 0%,#bdd2ea 45%,#a9c2df 50%,#c2d6ec 100%);border:1px solid #5b6f88;border-radius:2px;box-shadow:inset 0 0 0 1px rgba(255,255,255,0.45);"></div>
<svg class="a" style="left:933.5px;top:406.0px" width="11" height="9" viewBox="0 0 12 10"><rect x="0.7" y="0.7" width="10.4" height="8.4" rx="1.2" fill="#fff" stroke="#444444" stroke-width="1.2"/><rect x="3.6" y="3.4" width="4.6" height="2.8" fill="#b9cde4" stroke="#444444" stroke-width="1.1"/></svg>
<div class="a " style="left:957px;top:402px;width:30px;height:16px;background:linear-gradient(#e9a99b 0%,#d6705c 45%,#c4422c 50%,#d4715a 100%);border:1px solid #5a1c10;border-radius:2px;box-shadow:inset 0 0 0 1px rgba(255,255,255,0.45);"></div>
<svg class="a" style="left:967.4px;top:406.0px" width="11.2" height="9.5" viewBox="0 0 13 11"><path d="M0.8 1 h3.9 l1.8 2 l1.8 -2 h3.9 l-3.8 4.4 l3.8 4.4 h-3.9 l-1.8 -2 l-1.8 2 h-3.9 l3.8 -4.4Z" fill="#fff" stroke="#444444" stroke-width="1.25" stroke-linejoin="round"/></svg>
<div class="a " style="left:365px;top:424px;width:1px;height:388px;background:#f3f3f3;"></div>
<div class="a " style="left:365px;top:811px;width:613px;height:1px;background:#6e6e6e;"></div>
<div class="a t" style="left:383px;top:434.3px;">Файл:</div>
<div class="a t" style="left:418.3px;top:434.3px;">E:\upgrade\fsopt\test.xls</div>
<div class="a t" style="left:374.8px;top:452.9px;">Строка:</div>
<div class="a t" style="left:419px;top:452.9px;">4</div>
<div class="a " style="left:370px;top:478px;width:606px;height:318px;background:#fff;"></div>
<div class="a " style="left:370px;top:478px;width:606px;height:2px;background:#6e6e6e;"></div>
<div class="a " style="left:370px;top:478px;width:2px;height:318px;background:#6e6e6e;"></div>
<div class="a " style="left:977px;top:479px;width:1px;height:333px;background:#6e6e6e;"></div>
<div class="a " style="left:978px;top:479px;width:1px;height:333px;background:#a8a8a8;"></div>
<div class="a " style="left:975px;top:480px;width:2px;height:316px;background:#fff;"></div>
<div class="a " style="left:372px;top:480px;width:168px;height:16px;background:#f0f0f0;border-left:1px solid #fff;border-top:1px solid #fff;border-right:2px solid #6a6a6a;border-bottom:2px solid #6a6a6a;"></div>
<div class="a t" style="left:377px;top:483.4px;">Наименование</div>
<div class="a " style="left:543px;top:480px;width:58px;height:16px;background:#f0f0f0;border-left:1px solid #fff;border-top:1px solid #fff;border-right:2px solid #6a6a6a;border-bottom:2px solid #6a6a6a;"></div>
<div class="a t tc" style="left:543px;width:60px;text-align:center;top:483.4px;">Колонка</div>
<div class="a " style="left:604px;top:480px;width:369px;height:16px;background:#f0f0f0;border-left:1px solid #fff;border-top:1px solid #fff;border-right:2px solid #6a6a6a;border-bottom:2px solid #6a6a6a;"></div>
<div class="a t" style="left:611px;top:483.4px;">Значение</div>
<div class="a " style="left:372px;top:499px;width:603px;height:18px;background:#0078d7;outline:1px dotted #b8cce0;outline-offset:-1px;"></div>
<div class="a " style="left:372px;top:516px;width:603px;height:1px;background:#5a7ea8;"></div>
<div class="a t" style="left:375px;top:501.9px;color:#fff;">Код (артикул)</div>
<div class="a t tr" style="right:743px;top:501.9px;color:#fff;">2</div>
<div class="a t" style="left:608px;top:501.9px;color:#fff;">звс12</div>
<div class="a " style="left:372px;top:534px;width:603px;height:1px;background:#808080;"></div>
<div class="a t" style="left:375px;top:519.9px;color:#000;">Наименование</div>
<div class="a t tr" style="right:743px;top:519.9px;color:#000;">1</div>
<div class="a t" style="left:608px;top:519.9px;color:#000;">Замок ЗВС</div>
<div class="a " style="left:372px;top:552px;width:603px;height:1px;background:#808080;"></div>
<div class="a t" style="left:375px;top:537.9px;color:#000;">Единица</div>
<div class="a t tr" style="right:743px;top:537.9px;color:#000;">5</div>
<div class="a t" style="left:608px;top:537.9px;color:#000;">шт</div>
<div class="a " style="left:372px;top:570px;width:603px;height:1px;background:#808080;"></div>
<div class="a t" style="left:375px;top:555.9px;color:#000;">Штрих-код</div>
<div class="a t tr" style="right:743px;top:555.9px;color:#000;">6</div>
<div class="a t" style="left:608px;top:555.9px;color:#000;">4607007310017</div>
<div class="a " style="left:372px;top:588px;width:603px;height:1px;background:#808080;"></div>
<div class="a t" style="left:375px;top:573.9px;color:#000;">Количество</div>
<div class="a t tr" style="right:743px;top:573.9px;color:#000;">3</div>
<div class="a t" style="left:608px;top:573.9px;color:#000;">10</div>
<div class="a " style="left:372px;top:606px;width:603px;height:1px;background:#808080;"></div>
<div class="a t" style="left:375px;top:591.9px;color:#000;">Цена</div>
<div class="a t tr" style="right:743px;top:591.9px;color:#000;">4</div>
<div class="a t" style="left:608px;top:591.9px;color:#000;">300</div>
<div class="a " style="left:543px;top:499px;width:1px;height:281px;background:#808080;"></div>
<div class="a " style="left:604px;top:499px;width:1px;height:281px;background:#808080;"></div>
<div class="a " style="left:372px;top:779px;width:603px;height:17px;background-image:repeating-conic-gradient(#fff 0% 25%,#ececec 0% 50%);background-size:2px 2px;"></div>
<div class="a btn" style="left:372px;top:779px;width:15px;height:15px;"></div>
<svg class="a" style="left:377px;top:783px" width="5" height="9" viewBox="0 0 5 9"><path d="M4.5 0.5 V8.5 L0.5 4.5Z" fill="#000"/></svg>
<div class="a btn" style="left:389px;top:779px;width:15px;height:15px;"></div>
<div class="a btn" style="left:523px;top:779px;width:15px;height:15px;"></div>
<svg class="a" style="left:529px;top:783px" width="5" height="9" viewBox="0 0 5 9"><path d="M0.5 0.5 V8.5 L4.5 4.5Z" fill="#000"/></svg>
<div class="a " style="left:539px;top:779px;width:1px;height:17px;background:#808080;"></div>
<div class="a " style="left:540px;top:779px;width:7px;height:17px;background:#808080;"></div>
<div class="a " style="left:547px;top:779px;width:55px;height:17px;background:#c6c6c6;"></div>
<div class="a " style="left:602px;top:779px;width:7px;height:17px;background:#808080;"></div>
<div class="a btn" style="left:609px;top:779px;width:15px;height:15px;"></div>
<svg class="a" style="left:614px;top:783px" width="5" height="9" viewBox="0 0 5 9"><path d="M4.5 0.5 V8.5 L0.5 4.5Z" fill="#000"/></svg>
<div class="a btn" style="left:626px;top:779px;width:15px;height:15px;"></div>
<div class="a btn" style="left:955px;top:779px;width:15px;height:15px;"></div>
<svg class="a" style="left:961px;top:783px" width="5" height="9" viewBox="0 0 5 9"><path d="M0.5 0.5 V8.5 L4.5 4.5Z" fill="#000"/></svg>
<svg class="a" style="left:984px;top:603px" width="13" height="20" viewBox="0 0 13 20"><path d="M0.5 0.5 V16 L4 12.6 L6.6 18.6 L9 17.6 L6.4 11.8 H11.4Z" fill="#fff" stroke="#000" stroke-width="1"/></svg>
<div class="a " style="left:1166px;top:87px;width:187px;height:89px;background:#d8e3f1;border:1px solid #5e5e5e;border-radius:7px 0 0 0;overflow:hidden;"><div style="position:absolute;left:0;top:0;right:0;height:30px;background:linear-gradient(#bccadb 0%,#c6d4e4 50%,#d5e2f0 100%);"></div><div style="position:absolute;left:0;top:0;right:0;height:1px;background:rgba(255,255,255,0.55)"></div></div>
<div class="a t12" style="left:1178.6px;top:100.2px;color:#9b9b9b;">Сегодня</div>
<div class="a " style="left:1174px;top:118px;width:170px;height:52px;background:#f0f0f0;"></div>
<div class="a " style="left:1174px;top:118px;width:1px;height:52px;background:#fbfbfb;"></div>
<div class="a t" style="left:1180px;top:126.6px;letter-spacing:0.35px;">20/08/2022</div>
<div class="a t" style="left:1249.6px;top:126.6px;">сб</div>
<div class="a t" style="left:1278.7px;top:126.6px;letter-spacing:-0.1px;">18:29:50</div>
<div class="a " style="left:1166px;top:178px;width:187px;height:366px;background:#d8e3f1;border:1px solid #5e5e5e;border-radius:7px 0 0 0;overflow:hidden;"><div style="position:absolute;left:0;top:0;right:0;height:30px;background:linear-gradient(#bccadb 0%,#c6d4e4 50%,#d5e2f0 100%);"></div><div style="position:absolute;left:0;top:0;right:0;height:1px;background:rgba(255,255,255,0.55)"></div></div>
<div class="a t12" style="left:1178.6px;top:190.8px;color:#9b9b9b;">Команды</div>
<div class="a " style="left:1174px;top:209px;width:170px;height:326px;background:#f0f0f0;"></div>
<div class="a " style="left:1174px;top:209px;width:1px;height:326px;background:#fff;"></div>
<div class="a " style="left:1174px;top:535px;width:170px;height:1px;background:#6e6e6e;"></div>
<div class="a " style="left:1176px;top:218px;width:33px;height:17px;background:#f0f0f0;border-top:1px solid #fff;border-left:1px solid #fff;border-right:1px solid #e0e0e0;"></div>
<div class="a t" style="left:1180.5px;top:220.8px;">Спр</div>
<div class="a " style="left:1250px;top:218px;width:32px;height:17px;background:#f0f0f0;border-top:1px solid #fff;border-right:2px solid #6e6e6e;"></div>
<div class="a t" style="left:1252.5px;top:220.8px;">Отч</div>
<div class="a " style="left:1211px;top:214px;width:36px;height:22px;background:#f0f0f0;border-top:1px solid #fff;border-left:1px solid #fff;border-right:2px solid #6e6e6e;"></div>
<div class="a t" style="left:1217px;top:219.4px;">Док</div>
<div class="a " style="left:1176px;top:236px;width:168px;height:1px;background:#fff;"></div>
<div class="a " style="left:1179px;top:242px;width:160px;height:260px;background:#fff;border-top:1px solid #7f7f7f;border-left:1px solid #7f7f7f;border-right:1px solid #e8e8e8;"></div>
<div class="a t" style="left:1182.5px;top:244.4px;">Чеки</div>
<div class="a t" style="left:1182.5px;top:257.4px;">Р/Н</div>
<div class="a t" style="left:1182.5px;top:270.4px;">ПКО</div>
<div class="a t" style="left:1182.5px;top:283.4px;">РКО</div>
<svg class="a" style="left:1263px;top:512px" width="17" height="17" viewBox="0 0 17 17"><path d="M2 2 L15 15 M15 2 L2 15" stroke="#be1430" stroke-width="2.6"/></svg>
<svg class="a" style="left:1292px;top:513px" width="17" height="14" viewBox="0 0 17 14"><path d="M0.5 7 h6" stroke="#000" stroke-width="1.2"/><path d="M6 3 v8" stroke="#000" stroke-width="1.4"/><path d="M6.6 4.6 L9 5.4 H13 V8.6 H9 L6.6 9.4Z" fill="#e8e8e8" stroke="#000" stroke-width="1.2"/><path d="M14 2.4 v9.2" stroke="#000" stroke-width="1.8"/><rect x="9.6" y="6.2" width="2.2" height="1.6" fill="#000"/></svg>
<svg class="a" style="left:1320px;top:511px" width="17" height="17" viewBox="0 0 17 17"><rect x="1" y="1" width="11" height="13" rx="1.5" fill="#fff" stroke="#9a7a3a" stroke-width="1.2"/><path d="M3 4 h7 M3 6.5 h7 M3 9 h7" stroke="#c86a28" stroke-width="1.3"/><path d="M3 4 h2 M3 6.5 h2 M3 9 h2" stroke="#3a6ac8" stroke-width="1.3"/><circle cx="11.5" cy="12" r="4.2" fill="#2fa83a"/><path d="M9.3 12 l1.7 1.8 l3 -3.4" stroke="#fff" stroke-width="1.4" fill="none"/></svg>
<div class="a " style="left:1166px;top:546px;width:187px;height:297px;background:#d8e3f1;border:1px solid #5e5e5e;border-radius:7px 0 0 0;overflow:hidden;"><div style="position:absolute;left:0;top:0;right:0;height:25px;background:linear-gradient(#bccadb 0%,#c6d4e4 50%,#d5e2f0 100%);"></div><div style="position:absolute;left:0;top:0;right:0;height:1px;background:rgba(255,255,255,0.55)"></div></div>
<div class="a t12" style="left:1173.3px;top:555.6px;color:#9b9b9b;">Калькулятор</div>
<div class="a " style="left:1167px;top:572px;width:177px;height:271px;background:#f0f0f0;"></div>
<div class="a " style="left:1166px;top:843px;width:179px;height:1px;background:#5e5e5e;"></div>
<div class="a " style="left:1175px;top:578px;width:154px;height:25px;background:#000;"></div>
<div class="a " style="left:1175px;top:578px;width:154px;height:1px;background:#808080;"></div>
<div class="a " style="left:1175px;top:578px;width:1px;height:25px;background:#808080;"></div>
<div class="a " style="left:1330px;top:578px;width:13px;height:28px;background:#fff;border-left:1px solid #808080;border-top:1px solid #808080;border-bottom:1px solid #a0a0a0;"></div>
<div class="a " style="left:1332px;top:581px;width:10px;height:1px;background:#202020;"></div>
<div class="a " style="left:1332px;top:585px;width:10px;height:1px;background:#202020;"></div>
<div class="a " style="left:1332px;top:590px;width:10px;height:1px;background:#202020;"></div>
<div class="a " style="left:1332px;top:596px;width:10px;height:1px;background:#202020;"></div>
<div class="a " style="left:1332px;top:601px;width:10px;height:1px;background:#202020;"></div>
<div class="a " style="left:1332px;top:605px;width:10px;height:1px;background:#202020;"></div>
<div class="a " style="left:1331px;top:593px;width:12px;height:1px;background:#b0b0b0;"></div>
<div class="a " style="left:1342px;top:579px;width:1px;height:27px;background-image:repeating-linear-gradient(#000 0 1px,#fff 1px 2px);"></div>
<div class="a t" style="left:1175px;top:607.6px;">Память: 0</div>
<div class="a " style="left:1178px;top:632px;width:156px;height:159px;background:#808080;border:2px solid #ecec48;border-radius:7px;"></div>
<div class="a " style="left:1215px;top:643px;width:84px;height:115px;background:#fff;border:1px solid #fff;box-shadow:inset 1px 1px 0 #c8c8c8;"></div>
<div class="a btn" style="left:1183px;top:648px;width:25px;height:22px;"><span class="t tc" style="position:absolute;left:0;right:0;text-align:center;top:5.0px;">MR</span></div>
<div class="a btn" style="left:1306px;top:648px;width:24px;height:22px;"><span class="t tc" style="position:absolute;left:0;right:0;text-align:center;top:5.0px;">%</span></div>
<div class="a btn" style="left:1219px;top:648px;width:22px;height:22px;"><span class="t tc" style="position:absolute;left:0;right:0;text-align:center;top:5.0px;"><u>7</u></span></div>
<div class="a btn" style="left:1246px;top:648px;width:22px;height:22px;"><span class="t tc" style="position:absolute;left:0;right:0;text-align:center;top:5.0px;"><u>8</u></span></div>
<div class="a btn" style="left:1273px;top:648px;width:22px;height:22px;"><span class="t tc" style="position:absolute;left:0;right:0;text-align:center;top:5.0px;"><u>9</u></span></div>
<div class="a btn" style="left:1183px;top:676px;width:25px;height:22px;"><span class="t tc" style="position:absolute;left:0;right:0;text-align:center;top:5.0px;">M</span></div>
<div class="a btn" style="left:1306px;top:676px;width:24px;height:22px;"><span class="t tc" style="position:absolute;left:0;right:0;text-align:center;top:5.0px;">/</span></div>
<div class="a btn" style="left:1219px;top:676px;width:22px;height:22px;"><span class="t tc" style="position:absolute;left:0;right:0;text-align:center;top:5.0px;"><u>4</u></span></div>
<div class="a btn" style="left:1246px;top:676px;width:22px;height:22px;"><span class="t tc" style="position:absolute;left:0;right:0;text-align:center;top:5.0px;"><u>5</u></span></div>
<div class="a btn" style="left:1273px;top:676px;width:22px;height:22px;"><span class="t tc" style="position:absolute;left:0;right:0;text-align:center;top:5.0px;"><u>6</u></span></div>
<div class="a btn" style="left:1183px;top:704px;width:25px;height:22px;"><span class="t tc" style="position:absolute;left:0;right:0;text-align:center;top:5.0px;">M+</span></div>
<div class="a btn" style="left:1306px;top:704px;width:24px;height:22px;"><span class="t tc" style="position:absolute;left:0;right:0;text-align:center;top:5.0px;">x</span></div>
<div class="a btn" style="left:1219px;top:704px;width:22px;height:22px;"><span class="t tc" style="position:absolute;left:0;right:0;text-align:center;top:5.0px;"><u>1</u></span></div>
<div class="a btn" style="left:1246px;top:704px;width:22px;height:22px;"><span class="t tc" style="position:absolute;left:0;right:0;text-align:center;top:5.0px;"><u>2</u></span></div>
<div class="a btn" style="left:1273px;top:704px;width:22px;height:22px;"><span class="t tc" style="position:absolute;left:0;right:0;text-align:center;top:5.0px;"><u>3</u></span></div>
<div class="a btn" style="left:1183px;top:732px;width:25px;height:22px;"><span class="t tc" style="position:absolute;left:0;right:0;text-align:center;top:5.0px;">M-</span></div>
<div class="a btn" style="left:1306px;top:732px;width:24px;height:22px;"><span class="t tc" style="position:absolute;left:0;right:0;text-align:center;top:5.0px;">-</span></div>
<div class="a btn" style="left:1219px;top:732px;width:22px;height:22px;"><span class="t tc" style="position:absolute;left:0;right:0;text-align:center;top:5.0px;">+/-</span></div>
<div class="a btn" style="left:1246px;top:732px;width:22px;height:22px;"><span class="t tc" style="position:absolute;left:0;right:0;text-align:center;top:5.0px;">.</span></div>
<div class="a btn" style="left:1273px;top:732px;width:22px;height:22px;"><span class="t tc" style="position:absolute;left:0;right:0;text-align:center;top:5.0px;"><u>0</u></span></div>
<div class="a btn" style="left:1183px;top:762px;width:25px;height:22px;"><span class="t tc" style="position:absolute;left:0;right:0;text-align:center;top:5.0px;">CE</span></div>
<div class="a btn" style="left:1306px;top:762px;width:24px;height:22px;"><span class="t tc" style="position:absolute;left:0;right:0;text-align:center;top:5.0px;">+</span></div>
<div class="a btn" style="left:1219px;top:762px;width:22px;height:22px;"><span class="t tc" style="position:absolute;left:0;right:0;text-align:center;top:5.0px;">1/x</span></div>
<div class="a btn" style="left:1246px;top:762px;width:22px;height:22px;"><span class="t tc" style="position:absolute;left:0;right:0;text-align:center;top:5.0px;">&lt;--</span></div>
<div class="a btn" style="left:1273px;top:762px;width:22px;height:22px;"><span class="t tc" style="position:absolute;left:0;right:0;text-align:center;top:5.0px;">=</span></div>
<div class="a btn" style="left:1184px;top:802px;width:31px;height:33px;"></div>
<div class="a btn" style="left:1220px;top:802px;width:31px;height:33px;"></div>
<svg class="a" style="left:1193px;top:813px" width="15" height="14" viewBox="0 0 15 14"><rect x="0.5" y="0.5" width="8" height="10" fill="#fff" stroke="#000" stroke-width="1"/><rect x="6.5" y="3.5" width="8" height="10" fill="#fff" stroke="#000" stroke-width="1"/><path d="M2 2.5 h4.5 M2 6.5 h3.5" stroke="#2040c0" stroke-width="0.8"/><path d="M2 4.5 h3.5 M2 8.5 h3.5" stroke="#c02020" stroke-width="0.8"/><path d="M8 5.5 h5 M8 9.5 h5" stroke="#c02020" stroke-width="0.8"/><path d="M8 7.5 h5 M8 11.5 h5" stroke="#2040c0" stroke-width="0.8"/></svg>
<svg class="a" style="left:1228px;top:811px" width="17" height="17" viewBox="0 0 17 17"><rect x="1" y="2.6" width="12" height="12" rx="1" fill="#5a9a9a" stroke="#1a3a3a" stroke-width="1"/><path d="M1.5 3 h11 v11 h-11Z" fill="none" stroke="#3a7a7a" stroke-dasharray="1 1"/><path d="M4 3.4 c0 -3.4 6 -3.4 6 0Z" fill="#e8d060" stroke="#5a4a10" stroke-width="0.8"/><rect x="7.6" y="8.6" width="8.4" height="7" fill="#fff" stroke="#000080" stroke-width="1.2"/><path d="M9.4 11 h3.2 M9.4 13 h5" stroke="#000080" stroke-width="1.1"/></svg>
</div></body></html>
